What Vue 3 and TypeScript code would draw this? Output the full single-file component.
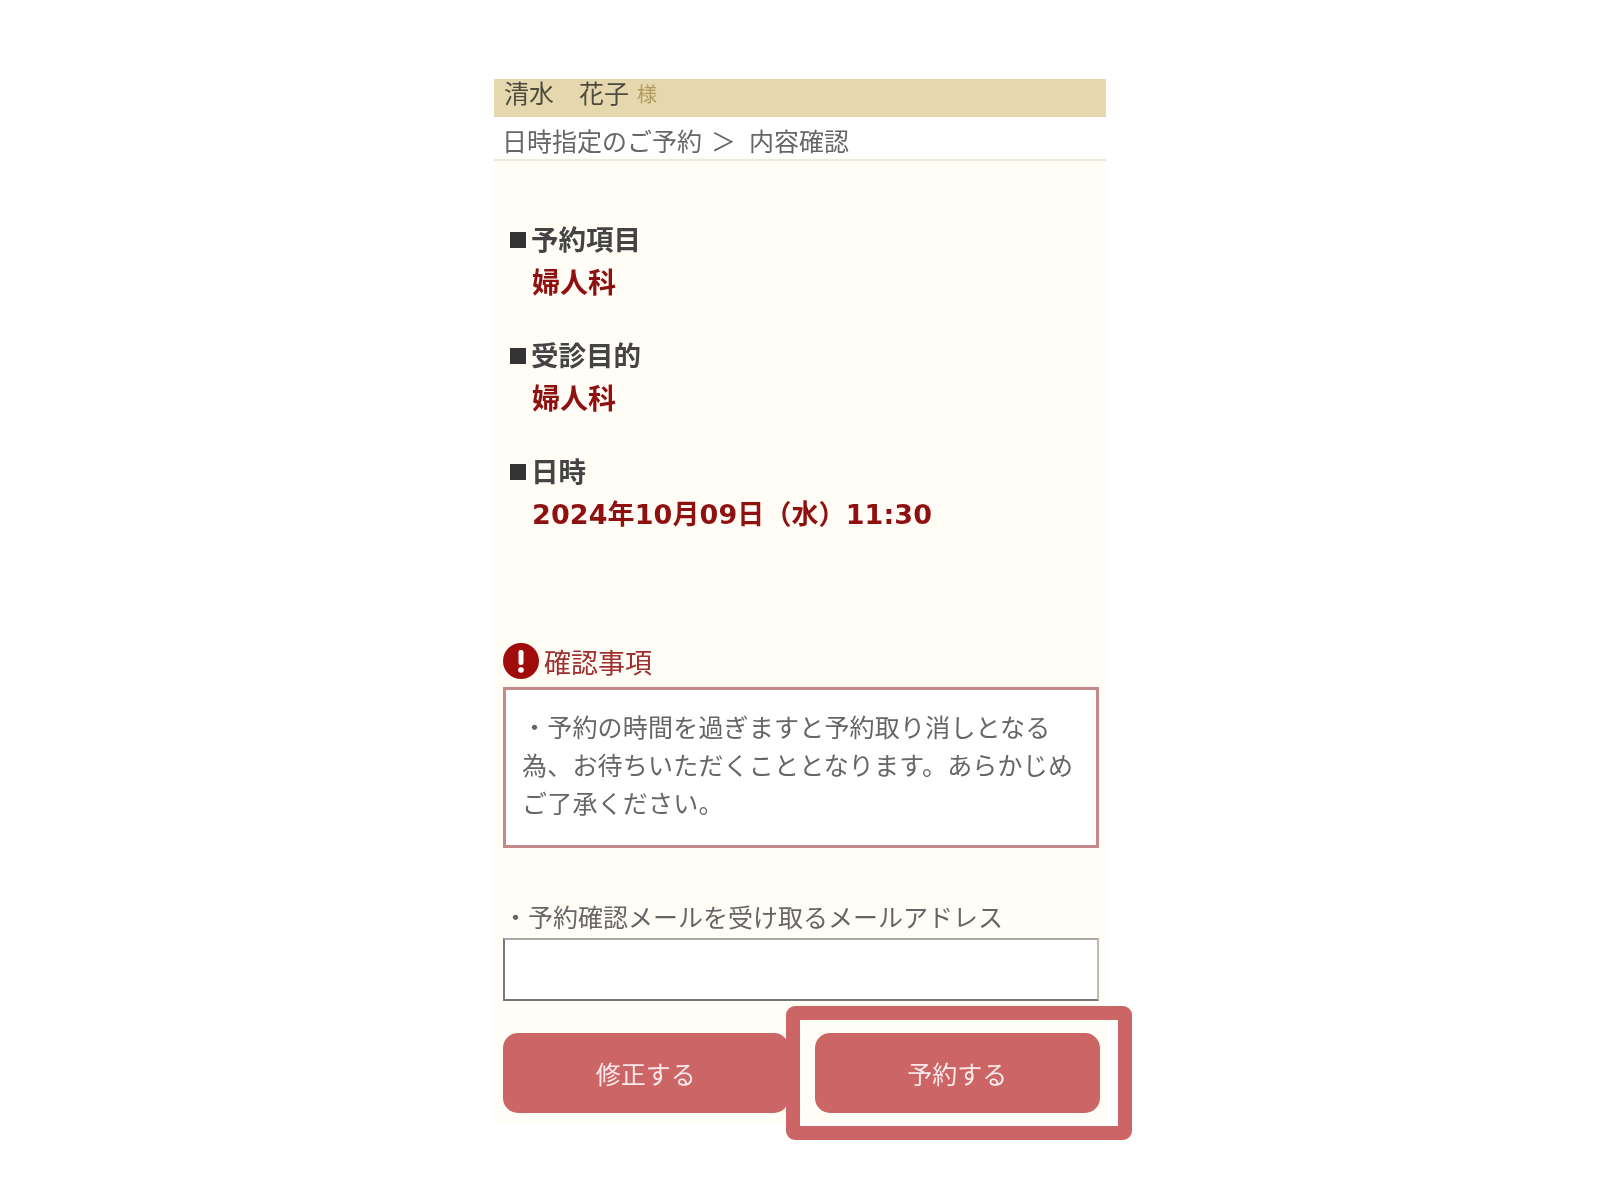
<script setup lang="ts">
interface Item { label: string; value: string; wide?: boolean }
const items: Item[] = [
  { label: '予約項目', value: '婦人科' },
  { label: '受診目的', value: '婦人科' },
  { label: '日時', value: '2024年10月09日（水）11:30', wide: true },
]
</script>

<template>
  <div class="page">
    <div class="phone">
      <div class="blurred">
        <div class="user"><span class="name">清水　花子</span><span class="sama">様</span></div>
        <div class="crumb">日時指定のご予約<span class="sep">＞</span>内容確認</div>
        <div class="items">
          <div v-for="item in items" :key="item.label" class="item">
            <div class="label"><span class="sq"></span>{{ item.label }}</div>
            <div class="value" :class="{ wide: item.wide }">{{ item.value }}</div>
          </div>
        </div>
        <div class="alert-head">
          <svg class="alert-icon" viewBox="0 0 36 36" width="36" height="36">
            <circle cx="18" cy="18" r="18" fill="#a00c0c" />
            <rect x="15.5" y="7" width="5" height="15" rx="2.2" fill="#fff" />
            <circle cx="18" cy="27" r="2.8" fill="#fff" />
          </svg>
          <span>確認事項</span>
        </div>
        <div class="notice">・予約の時間を過ぎますと予約取り消しとなる為、お待ちいただくこととなります。あらかじめご了承ください。</div>
        <div class="mail-label">・予約確認メールを受け取るメールアドレス</div>
        <input class="mail" type="text" />
        <div class="buttons">
          <button class="btn" type="button">修正する</button>
          <button class="btn" type="button">予約する</button>
        </div>
      </div>
      <div class="highlight"></div>
    </div>
  </div>
</template>

<style scoped>
.page {
  min-height: 1200px;
  background: #fff;
  padding-top: 79px;
  box-sizing: border-box;
  font-family: "Noto Sans CJK JP", "Liberation Sans", sans-serif;
  color: #555;
}
.phone {
  position: relative;
  width: 612px;
  height: 1044px;
  margin: 0 auto;
  background: #fffdf5;
}
.blurred {
  filter: blur(0.7px);
}
.user {
  height: 38px;
  box-sizing: border-box;
  background: #e5d8ae;
  padding: 0 0 12px 10px;
  display: flex;
  align-items: center;
  font-size: 25px;
  line-height: 30px;
  color: #4d4a3e;
}
.sama {
  font-size: 20px;
  color: #b09a5c;
  margin-left: 8px;
  margin-top: 4px;
}
.crumb {
  height: 44px;
  box-sizing: border-box;
  background: #fff;
  border-bottom: 2px solid #eee9dc;
  padding: 4px 0 0 8px;
  display: flex;
  align-items: center;
  font-size: 25px;
  color: #666;
  white-space: pre;
}
.sep {
  margin: 0 13px 0 9px;
}
.items {
  padding: 55px 0 0 15px;
  display: flex;
  flex-direction: column;
  gap: 30px;
}
.label {
  height: 43px;
  display: flex;
  align-items: center;
  font-size: 27.5px;
  font-weight: 700;
  color: #444;
}
.sq {
  width: 16px;
  height: 16px;
  background: #333;
  margin: 4px 5px 0 1px;
}
.value {
  height: 43px;
  display: flex;
  align-items: center;
  padding-left: 23px;
  font-size: 28px;
  font-weight: 700;
  color: #8f1010;
}
.value.wide {
  font-family: "DejaVu Sans", "Noto Sans CJK JP", sans-serif;
  font-size: 27px;
  letter-spacing: 0.1px;
}
.alert-head {
  display: flex;
  align-items: center;
  gap: 5px;
  margin: 109px 0 8px 9px;
  height: 36px;
  font-size: 27px;
  color: #a03030;
}
.notice {
  margin-left: 9px;
  width: 596px;
  height: 161px;
  box-sizing: border-box;
  border: 3px solid #c48a8a;
  background: #fff;
  padding: 17px 16px 0;
  font-size: 25px;
  letter-spacing: 0.2px;
  line-height: 38px;
  color: #666;
}
.mail-label {
  margin: 48px 0 0 9px;
  height: 42px;
  line-height: 40px;
  font-size: 25px;
  color: #666;
  white-space: nowrap;
}
.mail {
  display: block;
  margin-left: 9px;
  width: 596px;
  height: 63px;
  box-sizing: border-box;
  background: #fff;
  border: 2px solid;
  border-color: #aaa #bbb #777 #777;
  outline: none;
}
.buttons {
  display: flex;
  gap: 26px;
  margin: 32px 0 0 9px;
  width: 597px;
}
.btn {
  flex: 1;
  height: 80px;
  border: none;
  border-radius: 15px;
  background: #cc6666;
  color: #fbe9e9;
  font-family: inherit;
  font-size: 25px;
  padding: 0;
}
.highlight {
  position: absolute;
  left: 292px;
  top: 927px;
  width: 346px;
  height: 134px;
  box-sizing: border-box;
  border: 14px solid #cc6666;
  border-radius: 9px;
}
</style>
